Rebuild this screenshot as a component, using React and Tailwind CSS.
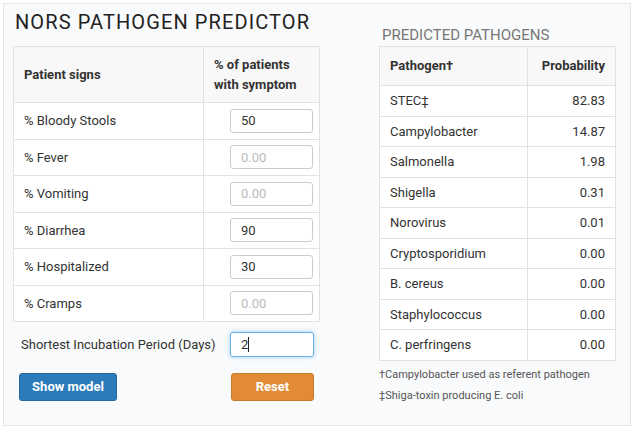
import React from "react";

const signs = [
  { label: "% Bloody Stools", value: "50" },
  { label: "% Fever", value: "" },
  { label: "% Vomiting", value: "" },
  { label: "% Diarrhea", value: "90" },
  { label: "% Hospitalized", value: "30" },
  { label: "% Cramps", value: "" },
];

const pathogens = [
  ["STEC‡", "82.83"],
  ["Campylobacter", "14.87"],
  ["Salmonella", "1.98"],
  ["Shigella", "0.31"],
  ["Norovirus", "0.01"],
  ["Cryptosporidium", "0.00"],
  ["B. cereus", "0.00"],
  ["Staphylococcus", "0.00"],
  ["C. perfringens", "0.00"],
];

export default function App() {
  return (
    <div
      className="w-[635px] h-[427px] bg-white pt-[3px] pl-[3px]"
      style={{ fontFamily: "Roboto, 'Noto Sans', sans-serif" }}
    >
      <div className="w-[628px] h-[423px] border border-[#e3e6e9] bg-[#f9fafb] flex pl-[9px]">
        <div className="w-[307px] flex flex-col">
          <h1 className="mt-[6px] ml-[2px] whitespace-nowrap text-[20px] leading-[24px] tracking-[0.055em] text-[#222]">
            NORS PATHOGEN PREDICTOR
          </h1>
          <table className="mt-[12px] w-[307px] bg-white border border-[#e1e1e1] border-collapse text-[13px] text-[#333]">
            <thead>
              <tr className="bg-[#f8f8f8] h-[56px]">
                <th className="border border-[#e1e1e1] text-left font-bold pl-[10px] w-[190px]">Patient signs</th>
                <th className="border border-[#e1e1e1] text-left font-bold pl-[10px] leading-[20px]">
                  % of patients
                  <br />
                  with symptom
                </th>
              </tr>
            </thead>
            <tbody>
              {signs.map((s) => (
                <tr key={s.label} className="h-[36.5px]">
                  <td className="border border-[#e1e1e1] pl-[10px]">{s.label}</td>
                  <td className="border border-[#e1e1e1] pr-[6px]">
                    <div className="flex justify-end">
                      <input
                        readOnly
                        value={s.value}
                        placeholder="0.00"
                        className="w-[83px] h-[24px] border border-[#ccc] rounded-[3px] pl-[10px] text-[13px] text-[#333] placeholder:text-[#bbb] outline-none"
                      />
                    </div>
                  </td>
                </tr>
              ))}
            </tbody>
          </table>
          <div className="flex items-center mt-[10px] h-[25px]">
            <span className="ml-[8px] text-[13px] text-[#333]">Shortest Incubation Period (Days)</span>
            <div className="ml-auto mr-[6px] w-[84px] h-[25px] border border-[#66afe9] rounded-[3px] bg-white pl-[10px] flex items-center text-[13px] text-[#333] shadow-[0_0_4px_rgba(102,175,233,0.6)]">
              2<span className="w-px h-[15px] bg-[#222]" />
            </div>
          </div>
          <div className="flex items-center mt-[16px]">
            <button className="ml-[6px] w-[98px] h-[28px] rounded-[3px] bg-[#2b7bba] border border-[#2468a0] text-white text-[13px] font-bold">
              Show model
            </button>
            <button className="ml-auto mr-[6px] w-[83px] h-[28px] rounded-[3px] bg-[#e28b35] border border-[#c97728] text-white text-[13px] font-bold">
              Reset
            </button>
          </div>
        </div>
        <div className="ml-[59px] w-[237px] flex flex-col">
          <h2 className="mt-[22px] ml-[3px] text-[15px] leading-[18px] text-[#777]">PREDICTED PATHOGENS</h2>
          <table className="mt-[2px] w-[237px] bg-white border border-[#e1e1e1] border-collapse text-[13px] text-[#333]">
            <thead>
              <tr className="bg-[#f8f8f8] h-[39px]">
                <th className="border border-[#e1e1e1] text-left font-bold pl-[10px] w-[148px]">Pathogen†</th>
                <th className="border border-[#e1e1e1] text-right font-bold pr-[10px]">Probability</th>
              </tr>
            </thead>
            <tbody>
              {pathogens.map(([n, p]) => (
                <tr key={n} className="h-[30.5px]">
                  <td className="border border-[#e1e1e1] pl-[10px]">{n}</td>
                  <td className="border border-[#e1e1e1] text-right pr-[10px]">{p}</td>
                </tr>
              ))}
            </tbody>
          </table>
          <p className="mt-[7px] text-[11px] leading-[14px] text-[#555]">†Campylobacter used as referent pathogen</p>
          <p className="mt-[7px] text-[11px] leading-[14px] text-[#555]">‡Shiga-toxin producing E. coli</p>
        </div>
      </div>
    </div>
  );
}
